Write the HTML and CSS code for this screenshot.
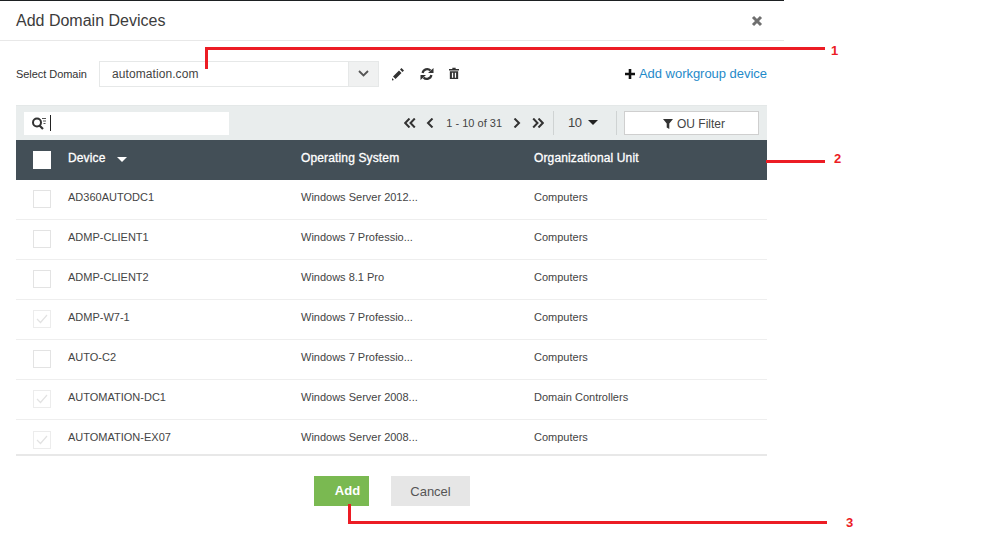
FILE: index.html
```html
<!DOCTYPE html>
<html lang="en">
<head>
<meta charset="utf-8">
<title>Add Domain Devices</title>
<link rel="stylesheet" href="styles.css">
</head>
<body>
<div class="dialog">
  <header class="head">
    <h1 class="title">Add Domain Devices</h1>
    <svg class="close" width="12" height="12" viewBox="0 0 12 12"><path d="M2 2l8 8M10 2l-8 8" stroke="#6f6f6f" stroke-width="3"/></svg>
  </header>
  <div class="domain-row">
    <span class="domain-label">Select Domain</span>
    <div class="select">
      <span class="select-value">automation.com</span>
      <span class="select-arrow"><svg width="11" height="7" viewBox="0 0 11 7"><path d="M1 1l4.500 4.500L10 1" fill="none" stroke="#555" stroke-width="1.800"/></svg></span>
    </div>
    <div class="tools">
      <svg width="14" height="14" viewBox="0 0 14 14"><path d="M2 9.500l6-6 2.500 2.500-6 6zM9 2.500l1.500-1.500 2.500 2.500L11.500 5zM1 11l2 2-2 .6z" fill="#333"/></svg>
      <svg width="14" height="14" viewBox="0 0 14 14"><path d="M2.600 6A4.600 4.600 0 0 1 10.500 3.600M11.400 8A4.600 4.600 0 0 1 3.500 10.400" fill="none" stroke="#333" stroke-width="2.200"/><path d="M8 6h5.500v-5zM6 8h-5.500v5z" fill="#333"/></svg>
      <svg width="10" height="13" viewBox="0 0 12 14"><path d="M4 0h4v1.500h4v1.800H0V1.500h4zM1 4.300h10V13.500H1zM3.500 6v6h1.500V6zM7 6v6h1.500V6z" fill="#333" fill-rule="evenodd"/></svg>
    </div>
    <a class="add-link"><svg width="10" height="10" viewBox="0 0 10 10"><path d="M5 0v10M0 5h10" stroke="#111" stroke-width="2.600"/></svg><span>Add workgroup device</span></a>
  </div>
  <div class="grid">
    <div class="toolbar">
      <div class="search">
        <svg width="16" height="14" viewBox="0 0 16 14"><circle cx="6" cy="6.500" r="4" fill="none" stroke="#333" stroke-width="2"/><path d="M8.500 9.500l3.500 3.500" stroke="#333" stroke-width="2.200"/><path d="M11 2.500h4M12 5h3M12.500 7.500h2" stroke="#555" stroke-width="1"/></svg>
        <span class="caret"></span>
      </div>
      <div class="pager">
        <svg width="12" height="10" viewBox="0 0 12 10"><path d="M5.500 .5L1.200 5l4.300 4.500M10.800 .5L6.500 5l4.300 4.500" fill="none" stroke="#333" stroke-width="2"/></svg>
        <svg class="pg-prev" width="8" height="10" viewBox="0 0 8 10"><path d="M6.500 .5L2 5l4.500 4.500" fill="none" stroke="#333" stroke-width="2"/></svg>
        <span class="pg-text">1 - 10 of 31</span>
        <svg class="pg-next" width="8" height="10" viewBox="0 0 8 10"><path d="M1.500 .5L6 5l-4.500 4.500" fill="none" stroke="#333" stroke-width="2"/></svg>
        <svg class="pg-last" width="12" height="10" viewBox="0 0 12 10"><path d="M1.200 .5L5.500 5 1.200 9.500M6.500 .5L10.800 5l-4.300 4.500" fill="none" stroke="#333" stroke-width="2"/></svg>
      </div>
      <span class="sep"></span>
      <div class="size"><span>10</span><i class="caret-down"></i></div>
      <span class="sep"></span>
      <button class="ou"><svg width="10" height="10" viewBox="0 0 10 10"><path d="M0 0h10L6.300 4.500V10L3.700 8.500v-4z" fill="#333"/></svg>OU Filter</button>
    </div>
    <div class="row row-head">
      <span class="cell-check"><span class="box box-head"></span></span>
      <span class="col">Device<i class="caret-down caret-white"></i></span>
      <span class="col">Operating System</span>
      <span class="col">Organizational Unit</span>
    </div>
    <div class="row"><span class="cell-check"><span class="box"></span></span><span class="col">AD360AUTODC1</span><span class="col">Windows Server 2012...</span><span class="col">Computers</span></div>
    <div class="row"><span class="cell-check"><span class="box"></span></span><span class="col">ADMP-CLIENT1</span><span class="col">Windows 7 Professio...</span><span class="col">Computers</span></div>
    <div class="row"><span class="cell-check"><span class="box"></span></span><span class="col">ADMP-CLIENT2</span><span class="col">Windows 8.1 Pro</span><span class="col">Computers</span></div>
    <div class="row"><span class="cell-check"><span class="box box-off"><svg width="12" height="10" viewBox="0 0 12 10"><path d="M1 5l3.500 3.500L11 1" fill="none" stroke="#e2e2e2" stroke-width="1.200"/></svg></span></span><span class="col">ADMP-W7-1</span><span class="col">Windows 7 Professio...</span><span class="col">Computers</span></div>
    <div class="row"><span class="cell-check"><span class="box"></span></span><span class="col">AUTO-C2</span><span class="col">Windows 7 Professio...</span><span class="col">Computers</span></div>
    <div class="row"><span class="cell-check"><span class="box box-off"><svg width="12" height="10" viewBox="0 0 12 10"><path d="M1 5l3.500 3.500L11 1" fill="none" stroke="#e2e2e2" stroke-width="1.200"/></svg></span></span><span class="col">AUTOMATION-DC1</span><span class="col">Windows Server 2008...</span><span class="col">Domain Controllers</span></div>
    <div class="row row-last"><span class="cell-check"><span class="box box-off"><svg width="12" height="10" viewBox="0 0 12 10"><path d="M1 5l3.500 3.500L11 1" fill="none" stroke="#e2e2e2" stroke-width="1.200"/></svg></span></span><span class="col">AUTOMATION-EX07</span><span class="col">Windows Server 2008...</span><span class="col">Computers</span></div>
  </div>
  <div class="actions">
    <button class="btn btn-add">Add</button>
    <button class="btn btn-cancel">Cancel</button>
  </div>
</div>
<span class="line l1a"></span><span class="line l1b"></span><span class="num n1">1</span>
<span class="line l2"></span><span class="num n2">2</span>
<span class="line l3a"></span><span class="line l3b"></span><span class="num n3">3</span>
</body>
</html>
```
FILE: styles.css
```css
* { box-sizing: border-box; }
html, body { margin: 0; padding: 0; }
body { width: 984px; height: 538px; overflow: hidden; background: #fff; font-family: "Liberation Sans", Arial, sans-serif; color: #333; position: relative; }
.dialog { width: 784px; border-top: 1px solid #1d2022; }
.head { height: 40px; border-bottom: 1px solid #e8e8e8; display: flex; align-items: center; justify-content: space-between; padding: 1px 21px 0 16px; }
.title { margin: 0; font-size: 16px; font-weight: 400; color: #3c3c3c; }
.domain-row { height: 64px; padding: 1px 17px 0 16px; display: flex; align-items: center; }
.domain-label { width: 83px; font-size: 11px; letter-spacing: -.05px; color: #333; }
.select { width: 280px; height: 26px; border: 1px solid #e6e8e8; display: flex; align-items: center; justify-content: space-between; }
.select-value { padding-left: 12px; font-size: 12px; letter-spacing: .08px; color: #444; }
.select-arrow { width: 30px; height: 24px; background: #f0f1f1; border-left: 1px solid #e6e8e8; display: flex; align-items: center; justify-content: center; }
.tools { margin-left: 12px; display: flex; align-items: center; gap: 15px; }
.add-link { margin-left: auto; display: flex; align-items: center; gap: 4px; font-size: 13px; letter-spacing: -.03px; color: #1f8ac9; }
.grid { width: 751px; margin-left: 16px; }
.toolbar { height: 35px; background: #e9eded; display: flex; align-items: center; padding: 0 8px; border-top: 1px solid #e4e8e8; }
.search { width: 205px; height: 23px; background: #fff; display: flex; align-items: center; padding-left: 7px; gap: 3px; }
.caret { width: 1px; height: 16px; background: #222; }
.pager { margin-left: auto; display: flex; align-items: center; font-size: 11px; color: #444; }
.pg-prev { margin-left: 10px; }
.pg-text { margin: 0 11px 0 12px; }
.pg-last { margin-left: 11px; }
.sep { width: 1px; height: 24px; background: #cfd3d3; margin: 0 0 0 9px; }
.size { width: 53px; display: flex; align-items: center; padding-left: 14px; font-size: 13px; letter-spacing: -.6px; gap: 7px; color: #444; padding-bottom: 2px; }
.caret-down { display: inline-block; width: 0; height: 0; border: 5px solid transparent; border-top: 5px solid #222; border-bottom: 0; flex: none; }
.caret-white { border-top-color: #fff; margin-left: 11px; vertical-align: 0; }
.ou { width: 135px; height: 24px; margin-left: 7px; border: 1px solid #cfcfcf; background: #fff; font: 12px "Liberation Sans", Arial, sans-serif; color: #444; display: flex; align-items: center; justify-content: center; gap: 4px; padding: 1px 0 0 5px; }
.row { height: 40px; display: flex; align-items: center; border-bottom: 1px solid #eeeeee; font-size: 11px; color: #444; padding-bottom: 5px; }
.row-head { background: #434f57; color: #fff; font-size: 12px; font-weight: 400; letter-spacing: .14px; -webkit-text-stroke: .3px #fff; border-bottom: 0; padding-bottom: 4px; }
.row-last { height: 36px; border-bottom: 2px solid #e8e8e8; padding-bottom: 0; }
.cell-check { width: 52px; padding-left: 17px; display: flex; }
.row-last .cell-check { margin-top: 3px; }
.box { width: 18px; height: 18px; border: 1px solid #e3e3e3; display: flex; align-items: center; justify-content: center; background: #fff; margin-top: 3px; }
.box-head { border: 0; margin-top: 4px; }
.box-off { border-color: #ececec; }
.col { width: 233px; }
.actions { width: 784px; margin-top: 20px; padding-left: 314px; display: flex; gap: 22px; }
.btn { height: 30px; border: 0; font: 13px "Liberation Sans", Arial, sans-serif; padding: 0; }
.btn-add { width: 55px; background: #7ab951; color: #fff; font-weight: 700; font-size: 13px; padding: 0 0 2px 12px; }
.btn-cancel { width: 79px; background: #e6e6e6; color: #555; }
.line { position: absolute; background: #ec1c24; }
.l1a { left: 205px; top: 47px; width: 3px; height: 22px; }
.l1b { left: 205px; top: 47px; width: 620px; height: 3px; }
.l2 { left: 766px; top: 160px; width: 59px; height: 3px; }
.l3a { left: 348px; top: 504px; width: 3px; height: 20px; }
.l3b { left: 348px; top: 521px; width: 479px; height: 3px; }
.num { position: absolute; font: 700 13px "Liberation Sans", sans-serif; color: #ec1c24; }
.n1 { left: 831px; top: 43px; }
.n2 { left: 834px; top: 151px; }
.n3 { left: 846px; top: 515px; }
```
